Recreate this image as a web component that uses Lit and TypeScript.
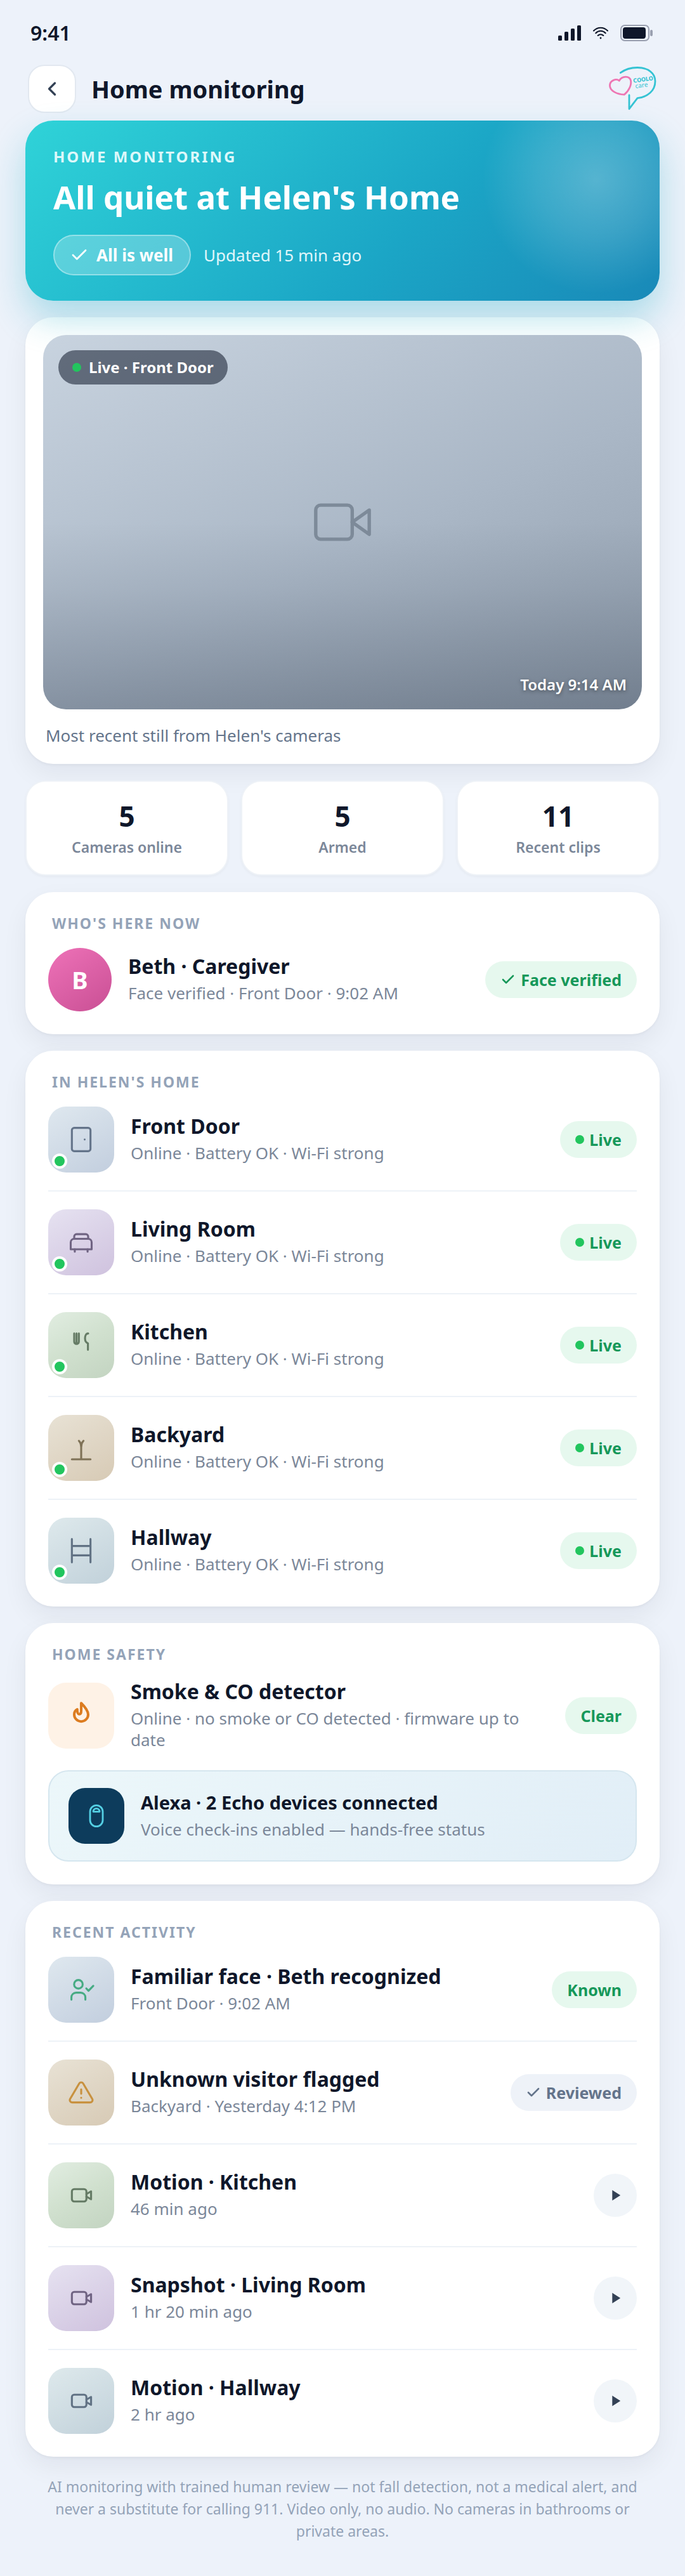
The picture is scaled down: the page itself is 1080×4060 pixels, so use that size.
import { LitElement, html, svg, css, nothing } from "lit";
import { customElement, property } from "lit/decorators.js";
import { classMap } from "lit/directives/class-map.js";

const icons: Record<string, unknown> = {
  back: svg`<path d="M15 18l-6-6 6-6" />`,
  check: svg`<path d="M20 6 9 17l-5-5" />`,
  play: svg`<path d="M8 5v14l11-7z" fill="currentColor" stroke="none" />`,
  camera: svg`<rect x="1" y="5" width="15" height="14" rx="2" /><path d="M23 7l-7 5 7 5z" />`,
  clip: svg`<rect x="4" y="6.7" width="12.5" height="10.6" rx="2" /><path d="M16.5 10.9l4-2.3v6.8l-4-2.3" />`,
  door: svg`<rect x="4" y="2" width="16" height="20" rx="2" /><circle cx="15" cy="12" r="0.8" fill="currentColor" stroke="none" />`,
  sofa: svg`<path d="M3 18v-6a3 3 0 0 1 3-3h12a3 3 0 0 1 3 3v6z" /><path d="M6 9V7a2 2 0 0 1 2-2h8a2 2 0 0 1 2 2v2" /><path d="M6.5 18v2M17.5 18v2" />`,
  utensils: svg`<path d="M6 2v7a2 2 0 0 0 4 0V2M8 2v9" /><path d="M18 2c-1.8 0-2.7 2-2.7 4.2s.9 3.8 2.5 4.3V16" />`,
  yard: svg`<path d="M4 21.8h16M12 21.5V9.5" /><path d="M12 10.5c0-2.2-1-3.5-2-4.6M12 10.5c0-2.2 1-3.5 2-4.6" />`,
  hall: svg`<path d="M4 2v20M20 2v20M4 8h16M4 16h16" />`,
  flame: svg`<path d="M12 1.2c3 3 6 6.3 6 9.8a6 6 0 0 1-12 0c0-2 1-3.6 2.6-4.4 0 2.4.3 4.2 1.7 4.2 1.2 0 1.7-1 1.7-3z" />`,
  echo: svg`<rect x="6" y="2" width="12" height="20" rx="6" /><path d="M9 8h6a3 3 0 0 0-6 0z" />`,
  person: svg`<circle cx="9.6" cy="7.3" r="3.7" /><path d="M3.6 20.5v-2a4 4 0 0 1 4-4h4a4 4 0 0 1 4 4v2" /><path d="M16.4 10.9l1.9 2 4.1-4.2" />`,
  alert: svg`<path d="M10.3 4.2 2.5 17.5a2 2 0 0 0 1.7 3h15.6a2 2 0 0 0 1.7-3L13.7 4.2a2 2 0 0 0-3.4 0z" /><path d="M12 9.3v3.7M12 16.5h.01" />`,
};

@customElement("line-icon")
export class LineIcon extends LitElement {
  @property({ type: String }) name = "";

  render() {
    return html`<svg viewBox="0 0 24 24" aria-hidden="true">${icons[this.name] ?? nothing}</svg>`;
  }

  static styles = css`
    :host {
      display: block;
      flex: none;
      width: 44px;
      height: 44px;
    }
    svg {
      display: block;
      width: 100%;
      height: 100%;
      fill: none;
      stroke: currentColor;
      stroke-width: var(--stroke, 1.7);
      stroke-linecap: round;
      stroke-linejoin: round;
    }
  `;
}

@customElement("status-pill")
export class StatusPill extends LitElement {
  @property({ type: String }) tone = "green";
  @property({ type: String }) mark = "";

  render() {
    return html`
      <span class=${classMap({ pill: true, grey: this.tone === "grey" })}>
        ${this.mark === "dot" ? html`<i class="dot"></i>` : nothing}
        ${this.mark === "check" ? html`<line-icon name="check"></line-icon>` : nothing}
        <slot></slot>
      </span>
    `;
  }

  static styles = css`
    :host {
      display: block;
      flex: none;
    }
    .pill {
      display: flex;
      align-items: center;
      gap: 8px;
      padding: 12px 24px;
      border-radius: 999px;
      background: #e6f8ee;
      color: #16985a;
      font-size: 25px;
      font-weight: 700;
      line-height: 34px;
      white-space: nowrap;
    }
    .grey {
      background: #eef2f8;
      color: #64748b;
    }
    .dot {
      width: 14px;
      height: 14px;
      border-radius: 50%;
      background: #22c55e;
    }
    line-icon {
      width: 24px;
      height: 24px;
      --stroke: 2.6;
    }
  `;
}

@customElement("info-row")
export class InfoRow extends LitElement {
  @property({ type: String }) label = "";
  @property({ type: String }) detail = "";
  @property({ type: String }) icon = "";
  @property({ type: String }) tint = "";
  @property({ type: String }) ink = "";
  @property({ type: Boolean }) online = false;

  render() {
    return html`
      <slot name="lead">
        <div class="thumb ${this.tint}">
          <line-icon class=${this.ink} name=${this.icon}></line-icon>
          ${this.online ? html`<i class="online"></i>` : nothing}
        </div>
      </slot>
      <div class="text">
        <h3>${this.label}</h3>
        <p>${this.detail}</p>
      </div>
      <slot></slot>
    `;
  }

  static styles = css`
    :host {
      display: flex;
      align-items: center;
      gap: 26px;
    }
    .thumb {
      position: relative;
      display: grid;
      place-items: center;
      flex: none;
      width: 104px;
      height: 104px;
      border-radius: 28px;
    }
    .blue {
      background: linear-gradient(150deg, #dfe8ef, #c2cede);
      color: #64748a;
    }
    .violet {
      background: linear-gradient(150deg, #e6e2f1, #cfc2de);
      color: #706483;
    }
    .green {
      background: linear-gradient(150deg, #e1ede1, #d0e0ce 50%, #c3d4c1);
      color: #657b65;
    }
    .sand {
      background: linear-gradient(150deg, #e8e2d5, #d7cab5);
      color: #7f7257;
    }
    .teal {
      background: linear-gradient(150deg, #dee9ec, #c1d1da);
      color: #617284;
    }
    .peach {
      background: #fef2e6;
      color: #dc7c20;
    }
    .peach line-icon {
      --stroke: 2.2;
    }
    .ok {
      color: #46ab83;
    }
    .warn {
      color: #c8913f;
    }
    .online {
      position: absolute;
      left: 6px;
      bottom: 6px;
      width: 16px;
      height: 16px;
      border: 4px solid #fff;
      border-radius: 50%;
      background: #22c55e;
    }
    .text {
      flex: 1;
      min-width: 0;
    }
    h3 {
      margin: 0 0 8px;
      color: #0f172a;
      font-size: var(--label-size, 32px);
      font-weight: 700;
      line-height: 34px;
    }
    p {
      margin: 0;
      color: #7b8799;
      font-size: 26px;
      line-height: 34px;
    }
  `;
}

const cameras = [
  { name: "Front Door", icon: "door", tint: "blue" },
  { name: "Living Room", icon: "sofa", tint: "violet" },
  { name: "Kitchen", icon: "utensils", tint: "green" },
  { name: "Backyard", icon: "yard", tint: "sand" },
  { name: "Hallway", icon: "hall", tint: "teal" },
];

const stats = [
  { value: 5, label: "Cameras online" },
  { value: 5, label: "Armed" },
  { value: 11, label: "Recent clips" },
];

const clips = [
  { label: "Motion · Kitchen", when: "46 min ago", tint: "green" },
  { label: "Snapshot · Living Room", when: "1 hr 20 min ago", tint: "violet" },
  { label: "Motion · Hallway", when: "2 hr ago", tint: "teal" },
];

@customElement("app-root")
export class AppRoot extends LitElement {
  renderStatusBar() {
    return html`
      <div class="status-bar">
        <span>9:41</span>
        <div class="status-icons">
          <svg width="36" height="24" viewBox="0 0 36 24" fill="#0f172a">
            <rect y="16" width="6" height="8" rx="1.5" />
            <rect x="10" y="10" width="6" height="14" rx="1.5" />
            <rect x="20" y="5" width="6" height="19" rx="1.5" />
            <rect x="30" width="6" height="24" rx="1.5" />
          </svg>
          <svg width="24" height="20" viewBox="0 0 24 20" fill="none" stroke="#0f172a" stroke-width="2" stroke-linecap="round">
            <path d="M1 6.5C7 0 17 0 23 6.5M4.3 10.2c4.4-4.6 11-4.6 15.4 0M7.7 14c2.5-2.5 6.1-2.5 8.6 0" />
            <circle cx="12" cy="18" r="1.4" fill="#0f172a" stroke="none" />
          </svg>
          <svg width="52" height="26" viewBox="0 0 52 26">
            <rect x="1" y="1" width="44" height="24" rx="6" fill="none" stroke="#9aa0b0" stroke-width="2" />
            <rect x="4" y="4" width="36" height="18" rx="4" fill="#0f172a" />
            <rect x="47" y="8" width="4" height="10" rx="2" fill="#9aa0b0" />
          </svg>
        </div>
      </div>
    `;
  }

  renderLogo() {
    return html`
      <svg class="logo" viewBox="0 0 76 70" fill="none" stroke-width="2.8" stroke-linecap="round" stroke-linejoin="round" role="img" aria-label="Coolo Care">
        <path stroke="#35c3d3" d="M18.3 9.7C26 4 35 1.5 45 1.5c17 0 28 9 28 21.5 0 15-12 25-28 26.7L32 66.7V45" />
        <path stroke="#ee76b3" d="M16.3 22.3C12 18.5 1.5 21 1.5 30c0 8 11 13.5 22.7 14.2C32 38 36 28 34.5 22c-2-8-14-7.5-18.2.3z" />
        <g transform="rotate(-8 50 26)" fill="#35c3d3" stroke="none">
          <text class="logo-top" x="39" y="24">COOLO</text>
          <text class="logo-sub" x="41" y="33">care</text>
        </g>
      </svg>
    `;
  }

  render() {
    return html`
      ${this.renderStatusBar()}
      <header>
        <button class="back" aria-label="Back"><line-icon name="back"></line-icon></button>
        <h1>Home monitoring</h1>
        ${this.renderLogo()}
      </header>

      <main>
        <section class="hero">
          <div class="eyebrow">HOME MONITORING</div>
          <h2>All quiet at Helen's Home</h2>
          <div class="hero-meta">
            <span class="well"><line-icon name="check"></line-icon>All is well</span>
            <span>Updated 15 min ago</span>
          </div>
        </section>

        <section class="card still">
          <div class="photo">
            <span class="badge"><i></i>Live · Front Door</span>
            <line-icon name="camera"></line-icon>
            <time>Today 9:14 AM</time>
          </div>
          <p>Most recent still from Helen's cameras</p>
        </section>

        <section class="stats">
          ${stats.map((s) => html`<div class="stat"><b>${s.value}</b><span>${s.label}</span></div>`)}
        </section>

        <section class="card">
          <h2 class="title">WHO'S HERE NOW</h2>
          <info-row label="Beth · Caregiver" detail="Face verified · Front Door · 9:02 AM">
            <div slot="lead" class="avatar">B</div>
            <status-pill mark="check">Face verified</status-pill>
          </info-row>
        </section>

        <section class="card">
          <h2 class="title">IN HELEN'S HOME</h2>
          <div class="rows">
            ${cameras.map(
              (c) => html`
                <info-row label=${c.name} detail="Online · Battery OK · Wi-Fi strong" icon=${c.icon} tint=${c.tint} online>
                  <status-pill mark="dot">Live</status-pill>
                </info-row>
              `
            )}
          </div>
        </section>

        <section class="card">
          <h2 class="title">HOME SAFETY</h2>
          <info-row
            class="detector"
            label="Smoke & CO detector"
            detail="Online · no smoke or CO detected · firmware up to date"
            icon="flame"
            tint="peach"
          >
            <status-pill>Clear</status-pill>
          </info-row>
          <info-row class="alexa" label="Alexa · 2 Echo devices connected" detail="Voice check-ins enabled — hands-free status">
            <div slot="lead" class="echo"><line-icon name="echo"></line-icon></div>
          </info-row>
        </section>

        <section class="card">
          <h2 class="title">RECENT ACTIVITY</h2>
          <div class="rows">
            <info-row label="Familiar face · Beth recognized" detail="Front Door · 9:02 AM" icon="person" tint="blue" ink="ok">
              <status-pill>Known</status-pill>
            </info-row>
            <info-row label="Unknown visitor flagged" detail="Backyard · Yesterday 4:12 PM" icon="alert" tint="sand" ink="warn">
              <status-pill tone="grey" mark="check">Reviewed</status-pill>
            </info-row>
            ${clips.map(
              (c) => html`
                <info-row label=${c.label} detail=${c.when} icon="clip" tint=${c.tint}>
                  <button class="play" aria-label="Play ${c.label}"><line-icon name="play"></line-icon></button>
                </info-row>
              `
            )}
          </div>
        </section>
      </main>

      <footer>
        AI monitoring with trained human review — not fall detection, not a medical alert, and never a substitute for
        calling 911. Video only, no audio. No cameras in bathrooms or private areas.
      </footer>
    `;
  }

  static styles = css`
    :host {
      display: block;
      min-height: 100vh;
      box-sizing: border-box;
      padding-bottom: 52px;
      background: #edf2fa;
      color: #0f172a;
      font-family: "Noto Sans", sans-serif;
    }
    h1,
    h2,
    p {
      margin: 0;
    }
    button {
      display: grid;
      place-items: center;
      box-sizing: border-box;
      padding: 0;
      border: 0;
      color: #334155;
      cursor: pointer;
    }

    .status-bar {
      display: flex;
      align-items: center;
      justify-content: space-between;
      padding: 30px 50px 28px 48px;
      font-size: 32px;
      font-weight: 600;
      line-height: 44px;
    }
    .status-icons {
      display: flex;
      align-items: center;
      gap: 19px;
    }
    header {
      display: flex;
      align-items: center;
      gap: 24px;
      padding: 0 44px 12px;
    }
    .back {
      width: 76px;
      height: 76px;
      border: 2px solid #e2e8f0;
      border-radius: 26px;
      background: #fff;
    }
    .back line-icon {
      width: 36px;
      height: 36px;
      --stroke: 2.2;
    }
    h1 {
      flex: 1;
      font-size: 38px;
      font-weight: 700;
      line-height: 52px;
    }
    .logo {
      width: 76px;
      height: 70px;
    }
    .logo-top {
      font: 700 9px "Liberation Sans Narrow", "DejaVu Sans Condensed", sans-serif;
    }
    .logo-sub {
      font-size: 10px;
    }

    main {
      display: flex;
      flex-direction: column;
      gap: 26px;
      padding: 0 40px;
    }
    .hero {
      position: relative;
      padding: 40px 44px;
      border-radius: 44px;
      background: radial-gradient(
          circle 180px at 90% 93px,
          rgba(255, 255, 255, 0.26),
          rgba(255, 255, 255, 0.14) 50%,
          rgba(255, 255, 255, 0.03) 88%,
          rgba(255, 255, 255, 0)
        ),
        linear-gradient(135deg, #2fd3d8, #1ba6c6 60%, #1989b8);
      box-shadow: 0 28px 56px rgba(30, 170, 195, 0.32);
      color: #fff;
    }
    .eyebrow {
      color: #dcf8fa;
      font-size: 24px;
      font-weight: 700;
      line-height: 34px;
      letter-spacing: 3px;
    }
    .hero h2 {
      margin: 12px 0 26px;
      font-size: 51px;
      font-weight: 700;
      line-height: 68px;
    }
    .hero-meta {
      display: flex;
      align-items: center;
      gap: 20px;
      color: #e0f6fa;
      font-size: 26px;
      line-height: 36px;
    }
    .well {
      display: flex;
      align-items: center;
      gap: 12px;
      padding: 12px 26px 12px 24px;
      border: 2px solid rgba(255, 255, 255, 0.35);
      border-radius: 999px;
      background: rgba(255, 255, 255, 0.24);
      color: #fff;
      font-weight: 700;
    }
    .well line-icon {
      width: 30px;
      height: 30px;
      --stroke: 2.2;
    }

    .card {
      padding: 32px 36px 36px;
      border-radius: 44px;
      background: #fff;
      box-shadow: 0 2px 4px rgba(15, 23, 32, 0.04), 0 16px 40px rgba(15, 23, 32, 0.06);
    }
    .title {
      margin: 0 6px 22px;
      color: #94a3b8;
      font-size: 23px;
      font-weight: 700;
      line-height: 34px;
      letter-spacing: 2px;
    }
    .rows info-row + info-row {
      margin-top: 28px;
      padding-top: 28px;
      border-top: 2px solid #edf2f7;
    }

    .still {
      padding: 28px;
    }
    .still p {
      margin: 24px 4px 0;
      color: #64748b;
      font-size: 26px;
      line-height: 34px;
    }
    .photo {
      position: relative;
      display: grid;
      place-items: center;
      aspect-ratio: 16 / 10;
      border-radius: 36px;
      background: linear-gradient(rgba(30, 41, 59, 0) 50%, rgba(30, 41, 59, 0.07) 68%, rgba(30, 41, 59, 0.26)),
        linear-gradient(155deg, #c8d3df, #aab7c6 55%, #8f9cab);
      color: #7d8a99;
    }
    .photo line-icon {
      width: 92px;
      height: 92px;
      --stroke: 1.4;
    }
    .badge {
      position: absolute;
      top: 24px;
      left: 24px;
      display: flex;
      align-items: center;
      gap: 12px;
      padding: 10px 22px;
      border-radius: 999px;
      background: rgba(15, 23, 42, 0.55);
      color: #fff;
      font-size: 24px;
      font-weight: 700;
      line-height: 34px;
    }
    .badge i {
      width: 14px;
      height: 14px;
      border-radius: 50%;
      background: #22c55e;
    }
    time {
      position: absolute;
      right: 24px;
      bottom: 22px;
      color: #fff;
      font-size: 24px;
      font-weight: 600;
      line-height: 34px;
      text-shadow: 0 2px 6px rgba(0, 0, 0, 0.4);
    }

    .stats {
      display: grid;
      grid-template-columns: repeat(3, 1fr);
      gap: 20px;
    }
    .stat {
      display: grid;
      gap: 6px;
      padding: 28px 12px 26px;
      border: 2px solid #eef2f7;
      border-radius: 32px;
      background: #fff;
      box-shadow: 0 2px 4px rgba(15, 23, 32, 0.04);
      text-align: center;
    }
    .stat b {
      font-size: 44px;
      font-weight: 700;
      line-height: 52px;
    }
    .stat span {
      color: #7b8799;
      font-size: 23px;
      font-weight: 600;
      line-height: 34px;
    }

    .avatar {
      display: grid;
      place-items: center;
      width: 100px;
      height: 100px;
      border-radius: 50%;
      background: linear-gradient(145deg, #ee72b8, #c94f94);
      color: #fff;
      font-size: 38px;
      font-weight: 700;
    }
    .detector {
      min-height: 116px;
    }
    .alexa {
      margin-top: 28px;
      padding: 26px 30px;
      border: 2px solid #d5e6ef;
      border-radius: 32px;
      background: linear-gradient(135deg, #ecf7fa, #e1eef7);
      --label-size: 29px;
    }
    .echo {
      display: grid;
      place-items: center;
      width: 88px;
      height: 88px;
      border-radius: 26px;
      background: #0d3c5c;
      color: #54cfe3;
    }
    .echo line-icon {
      width: 40px;
      height: 40px;
    }
    .play {
      flex: none;
      width: 68px;
      height: 68px;
      border-radius: 50%;
      background: #f1f5f9;
    }
    .play line-icon {
      width: 28px;
      height: 28px;
    }

    footer {
      padding: 30px 72px 0;
      color: #94a3b8;
      font-size: 23px;
      line-height: 35px;
      text-align: center;
    }
  `;
}
